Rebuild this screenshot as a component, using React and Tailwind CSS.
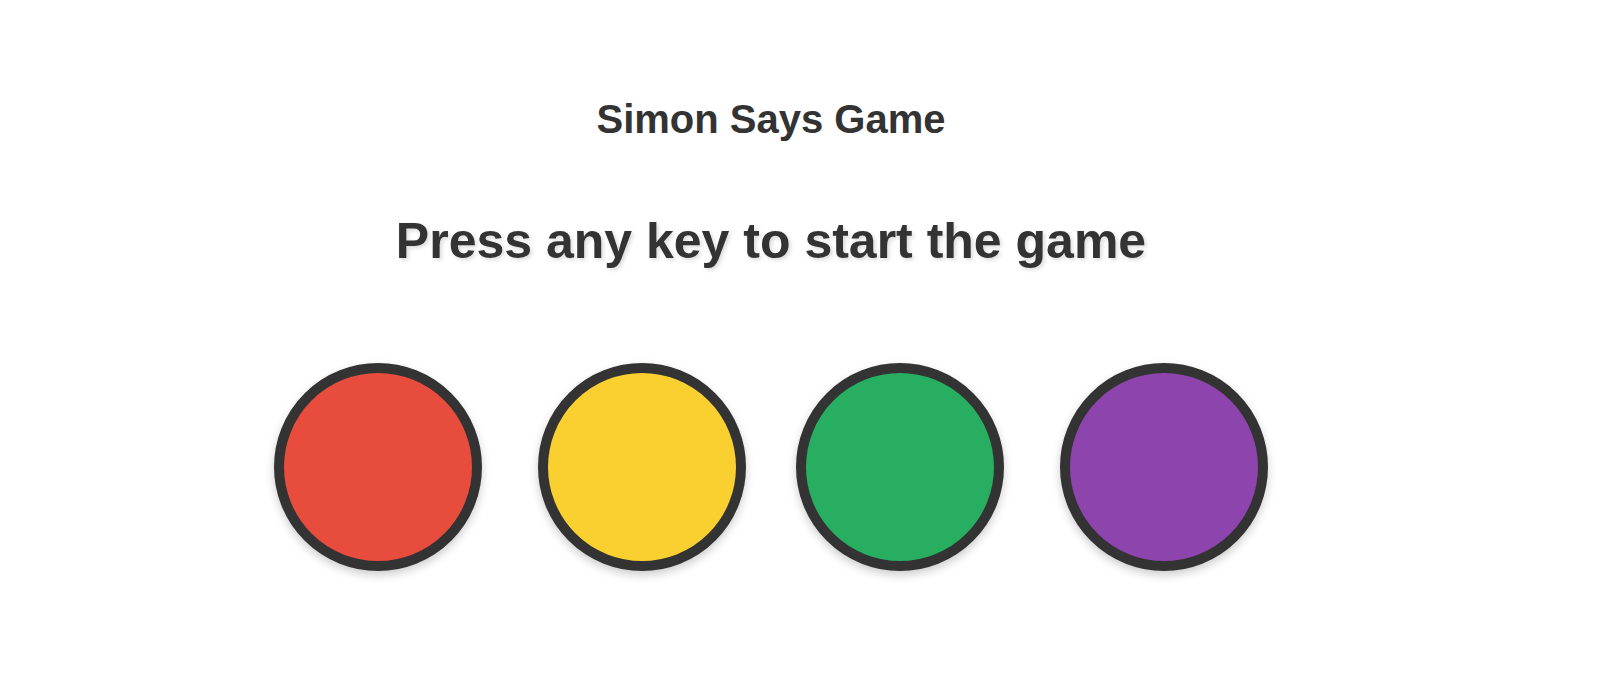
const PADS = [
  { id: 'red', color: 'bg-[#e74c3c]', space: '' },
  { id: 'yellow', color: 'bg-[#f9d02f]', space: 'ml-[56px]' },
  { id: 'green', color: 'bg-[#27ae60]', space: 'ml-[50px]' },
  { id: 'purple', color: 'bg-[#8e44ad]', space: 'ml-[56px]' },
]

export default function App() {
  return (
    <div className="min-h-screen bg-white text-[#333] font-['Liberation_Sans',Arial,sans-serif]">
      <div className="w-[1542px] flex flex-col items-center pt-[96px]">
        {/* Titulo */}
        <h1 className="text-[40px] leading-[46px] font-bold">Simon Says Game</h1>

        {/* Estado */}
        <h2 className="mt-[70px] text-[50px] leading-[58px] font-bold [text-shadow:2px_2px_4px_rgba(0,0,0,0.15)]">
          Press any key to start the game
        </h2>

        {/* Botones */}
        <div className="mt-[93px] flex">
          {PADS.map(p => (
            <div
              key={p.id}
              className={`w-[208px] h-[208px] rounded-full border-[10px] border-[#333] shadow-[0_4px_10px_rgba(0,0,0,0.2)] ${p.color} ${p.space}`}
            />
          ))}
        </div>
      </div>
    </div>
  )
}
